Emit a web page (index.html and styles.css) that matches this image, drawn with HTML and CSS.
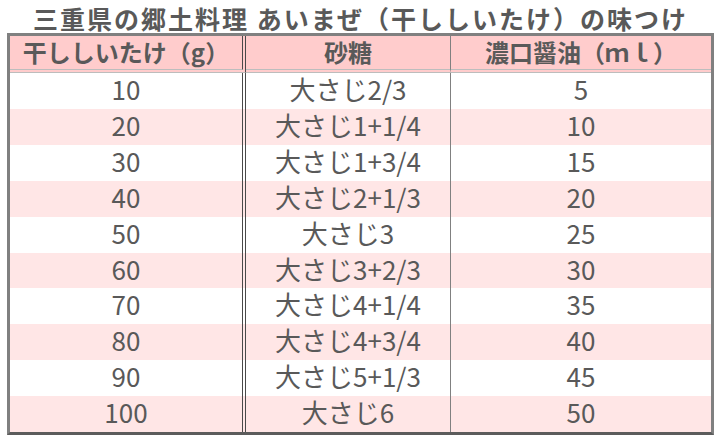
FILE: index.html
```html
<!DOCTYPE html>
<html lang="ja">
<head>
<meta charset="utf-8">
<title>あいまぜの味つけ</title>
<link rel="stylesheet" href="styles.css">
</head>
<body>
<div class="page">
  <h1 class="title">三重県の郷土料理 あいまぜ（干ししいたけ）の味つけ</h1>
  <table class="recipe">
    <thead>
      <tr>
        <th class="c1">干ししいたけ（g）</th>
        <th class="c2">砂糖</th>
        <th class="c3">濃口醤油（ｍｌ）</th>
      </tr>
    </thead>
    <tbody>
      <tr><td class="c1">10</td><td class="c2">大さじ2/3</td><td class="c3">5</td></tr>
      <tr><td class="c1">20</td><td class="c2">大さじ1+1/4</td><td class="c3">10</td></tr>
      <tr><td class="c1">30</td><td class="c2">大さじ1+3/4</td><td class="c3">15</td></tr>
      <tr><td class="c1">40</td><td class="c2">大さじ2+1/3</td><td class="c3">20</td></tr>
      <tr><td class="c1">50</td><td class="c2">大さじ3</td><td class="c3">25</td></tr>
      <tr><td class="c1">60</td><td class="c2">大さじ3+2/3</td><td class="c3">30</td></tr>
      <tr><td class="c1">70</td><td class="c2">大さじ4+1/4</td><td class="c3">35</td></tr>
      <tr><td class="c1">80</td><td class="c2">大さじ4+3/4</td><td class="c3">40</td></tr>
      <tr><td class="c1">90</td><td class="c2">大さじ5+1/3</td><td class="c3">45</td></tr>
      <tr><td class="c1">100</td><td class="c2">大さじ6</td><td class="c3">50</td></tr>
    </tbody>
  </table>
</div>
</body>
</html>
```
FILE: styles.css
```css
html, body {
  margin: 0;
  padding: 0;
  background: #ffffff;
}
body {
  font-family: "Noto Sans CJK JP", "Noto Sans", sans-serif;
  color: #595959;
}
.page {
  width: 722px;
  padding: 0 0 0 7px;
  box-sizing: border-box;
}
.title {
  margin: 0;
  padding-top: 3px;
  line-height: 30px;
  font-size: 25px;
  font-weight: 700;
  text-align: center;
  width: 707px;
  letter-spacing: 2px;
}
.recipe {
  width: 707px;
  border-collapse: separate;
  border-spacing: 0;
  border: 3px solid #808080;
  border-bottom-color: #5c5c5c;
  table-layout: fixed;
}
.recipe th,
.recipe td {
  padding: 0;
  text-align: center;
  white-space: nowrap;
}
.recipe th {
  height: 32px;
  padding-bottom: 1px;
  line-height: 32px;
  font-size: 24px;
  font-weight: 700;
  background: #ffcccc;
  border-bottom: 4px double #bdbdbd;
}
.recipe td {
  height: 32.4px;
  padding-bottom: 3.5px;
  line-height: 32.4px;
  font-size: 26px;
}
.recipe tbody tr:nth-child(even) td {
  background: #ffe6e6;
}
.recipe .c1 {
  width: 232px;
  border-right: 4px double #4a4a4a;
}
.recipe .c2 {
  width: 204px;
  border-right: 1px solid #808080;
}
.recipe .c3 {
  width: auto;
}
```
